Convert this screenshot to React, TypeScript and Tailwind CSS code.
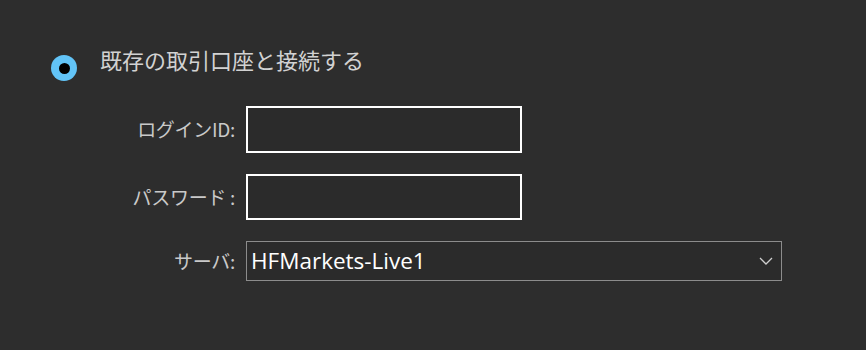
import React from 'react';

const jp = { fontFamily: '"Noto Sans CJK JP", "Noto Sans", sans-serif' };

export default function App() {
  return (
    <div className="w-full h-[350px] bg-[#2d2d2d] text-[#cfcfcf]" style={jp}>
      <div className="pt-[44px] pl-[51px] flex items-start gap-[23px]">
        <span className="mt-[11px] w-[26px] h-[26px] rounded-full bg-[#62c4f7] flex items-center justify-center">
          <span className="w-[11px] h-[11px] rounded-full bg-black" />
        </span>
        <span className="text-[22px] leading-[30px] text-[#d2d2d2]">既存の取引口座と接続する</span>
      </div>

      <div className="mt-[25px] flex flex-col gap-[21px]">
        <div className="flex items-center">
          <label className="w-[235px] text-right text-[19px] tracking-[-0.3px] text-[#c9c9c9]">ログインID:</label>
          <div className="ml-[11px] w-[276px] h-[47px] border-2 border-white bg-[#2b2b2b]" />
        </div>
        <div className="flex items-center">
          <label className="w-[235px] text-right text-[19px] tracking-[-0.3px] text-[#c9c9c9]">パスワード :</label>
          <div className="ml-[11px] w-[276px] h-[46px] border-2 border-white bg-[#2b2b2b]" />
        </div>
        <div className="flex items-center">
          <label className="w-[235px] text-right text-[19px] tracking-[-0.3px] text-[#c9c9c9]">サーバ:</label>
          <div className="ml-[11px] w-[536px] h-[40px] border border-[#8c8c8c] bg-[#2b2b2b] flex items-center justify-between pl-[4px] pr-[8px]">
            <span className="text-[22.5px] text-white" style={{ fontFamily: '"Open Sans", "Noto Sans", sans-serif' }}>HFMarkets-Live1</span>
            <svg width="14" height="8" viewBox="0 0 14 8" fill="none">
              <polyline points="1,1 7,7 13,1" stroke="#cfcfcf" strokeWidth="1.3" />
            </svg>
          </div>
        </div>
      </div>
    </div>
  );
}
